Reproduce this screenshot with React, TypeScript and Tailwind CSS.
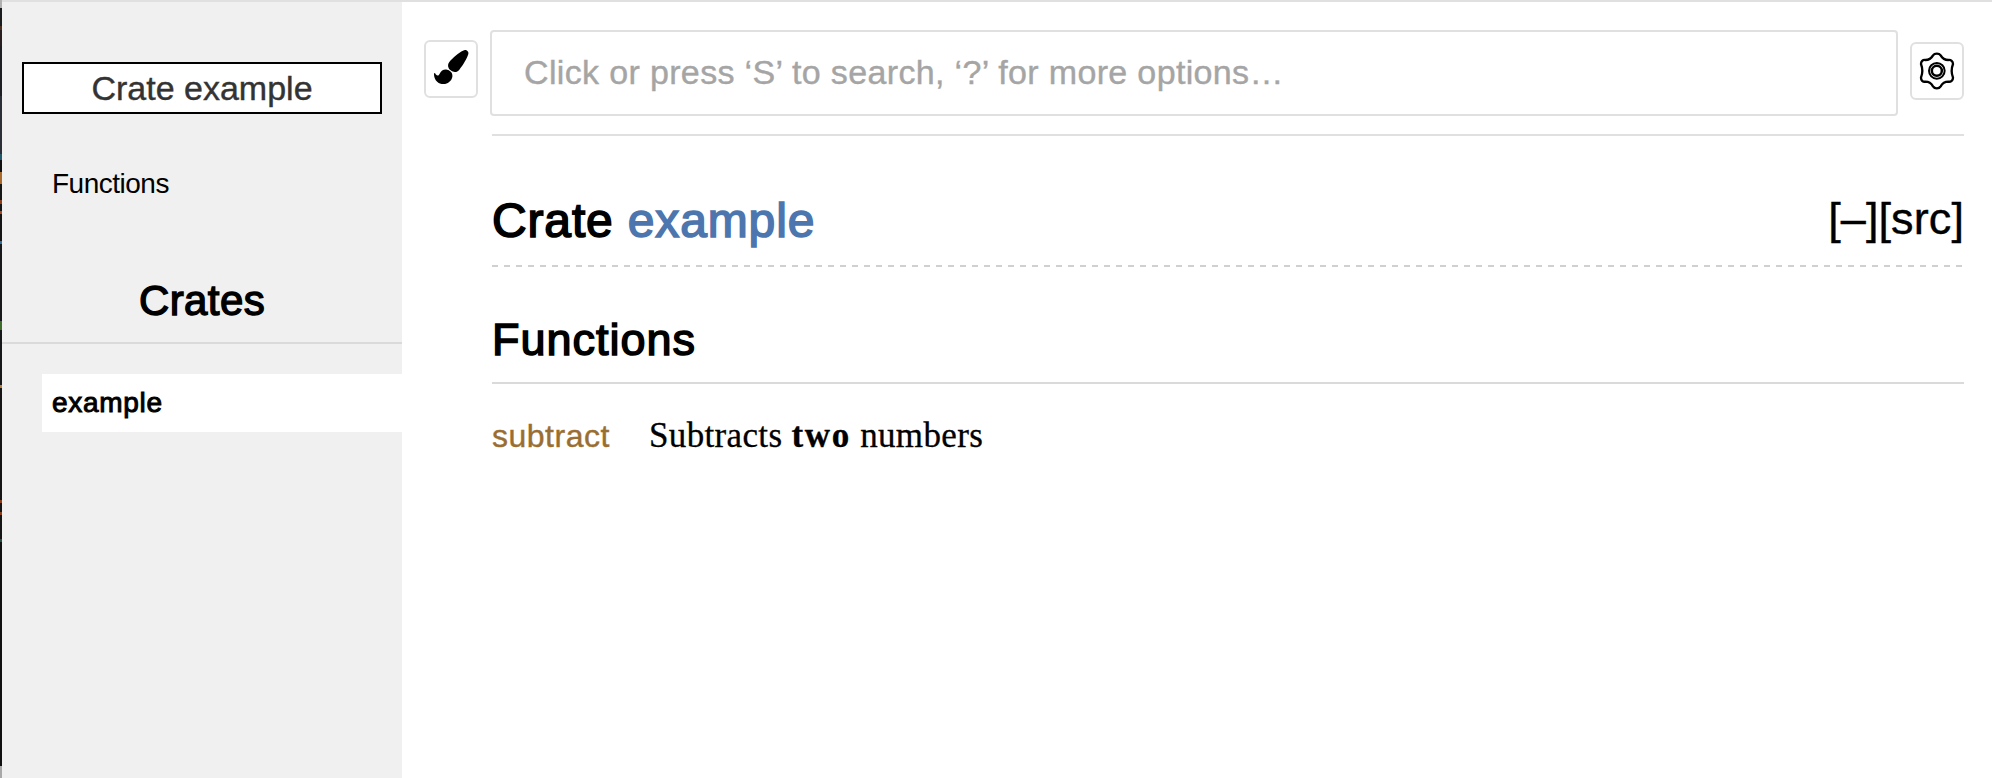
const STRIP: [number, number, string][] = [
  [0, 8, '#b0b0b0'], [8, 18, '#1a1c1e'], [26, 4, '#4a2f20'], [30, 16, '#2a1f20'], [46, 50, '#1d1f22'],
  [96, 58, '#2a2f38'], [154, 6, '#23576b'], [160, 12, '#101010'], [172, 12, '#a86a2c'], [184, 16, '#161616'],
  [200, 4, '#8a3f18'], [204, 7, '#161616'], [211, 3, '#a8481a'], [214, 27, '#141414'], [241, 3, '#2a6f9f'],
  [244, 77, '#17181a'], [321, 9, '#3f6b2c'], [330, 55, '#161718'], [385, 3, '#b87f3c'], [388, 112, '#151515'],
  [500, 3, '#8a3f18'], [503, 9, '#151515'], [512, 3, '#8a3f18'], [515, 24, '#151515'], [539, 3, '#245045'],
  [542, 224, '#101010'], [766, 12, '#a8a8a8'],
];

function Brush() {
  return (
    <svg viewBox="48 66 150 162" className="h-[54px] w-[50px]">
      <path d="M159 92C167 87 177 93 175 102C171 116 159 135 148 149C141 158 131 158 122 151C113 144 112 134 118 126C129 112 146 98 159 92Z" />
      <path d="M111 149C122 151 129 160 127 171C124 184 113 192 101 192C85 192 73 181 72 164C72 158 75 158 77 163C80 168 86 168 89 161C93 152 102 147 111 149Z" />
    </svg>
  );
}

function Gear() {
  return (
    <svg viewBox="96 72 150 162" className="h-[54px] w-[50px]" fill="none" stroke="#000">
      <path strokeWidth="7" strokeLinejoin="round" d="M159 106C164 99 177 99 182 106C187 115 194 120 205 120C213 119 219 124 219 132C214 145 214 160 219 173C219 181 213 186 205 185C194 185 187 190 182 199C177 207 164 207 159 199C154 190 147 185 136 185C128 186 123 181 123 173C128 160 128 145 123 132C123 124 128 119 136 120C147 120 154 115 159 106Z" />
      <circle cx="170.500" cy="152.500" r="23.500" strokeWidth="6" />
      <circle cx="170.500" cy="152.500" r="15" strokeWidth="7.500" />
    </svg>
  );
}

export default function App() {
  return (
    <div className="flex h-[778px] w-[1992px] overflow-hidden bg-white font-['Liberation_Sans',sans-serif] text-black">
      <div className="w-[2px] shrink-0">
        {STRIP.map(([y, h, c]) => <div key={y} style={{ height: h, background: c }} />)}
      </div>
      <div className="flex grow border-t-2 border-[#e0e0e0]">
        <aside className="w-[400px] shrink-0 bg-[#f0f0f0] pt-[60px]">
          <div className="mx-5 h-[52px] border-2 border-black bg-white text-center text-[34px] leading-[48px] text-[#333] [-webkit-text-stroke:0.4px_#333]">Crate example</div>
          <div className="mt-[50px] h-[40px] pl-[50px] text-[28px] leading-[40px] tracking-[-0.5px]">Functions</div>
          <h3 className="mt-[68px] h-[70px] pt-[4px] text-center text-[42px] leading-[50px] tracking-[0.4px] [-webkit-text-stroke:1.4px_#000]">Crates</h3>
          <div className="h-[2px] bg-[#dadada]" />
          <div className="mt-[30px] ml-[40px] h-[58px] bg-white pl-[10px] text-[28px] leading-[58px] tracking-[0.7px] [-webkit-text-stroke:1px_#000]">example</div>
        </aside>
        <main className="flex grow flex-col pr-[28px] pl-[22px] pt-[28px]">
          <div className="flex h-[86px] items-start">
            <button className="mt-[10px] h-[58px] w-[54px] shrink-0 rounded-[6px] border-2 border-[#e0e0e0]"><Brush /></button>
            <div className="ml-[12px] h-[86px] w-[1408px] shrink-0 rounded-[4px] border-2 border-[#e0e0e0] pl-[32px] text-[34px] leading-[81px] tracking-[0.35px] text-[#a5a5a5] [-webkit-text-stroke:0.4px_#a5a5a5]">Click or press ‘S’ to search, ‘?’ for more options…</div>
            <button className="mt-[12px] ml-[12px] h-[58px] w-[54px] shrink-0 rounded-[6px] border-2 border-[#e0e0e0]"><Gear /></button>
          </div>
          <div className="ml-[68px] mt-[18px] h-[2px] bg-[#e0e0e0]" />
          <div className="ml-[68px] flex h-[129px] justify-between">
            <h1 className="pt-[55px] text-[48px] leading-[60px] tracking-[0.85px] [-webkit-text-stroke:1.6px_currentColor]">Crate <span className="text-[#4d76ae]">example</span></h1>
            <div className="pt-[53px] text-[45px] leading-[60px] tracking-[0.1px] [-webkit-text-stroke:0.4px_#000]">[–][src]</div>
          </div>
          <div className="ml-[68px] h-[2px] bg-[repeating-linear-gradient(90deg,#d0d0d0_0_6px,transparent_6px_12px)]" />
          <h2 className="ml-[68px] h-[115px] pt-[43px] text-[45px] leading-[60px] tracking-[1px] [-webkit-text-stroke:1.5px_#000]">Functions</h2>
          <div className="ml-[68px] h-[2px] bg-[#dadada]" />
          <div className="ml-[68px] flex pt-[32px] leading-[40px]">
            <div className="w-[157px] text-[32px] tracking-[0.5px] text-[#9a6e31] [-webkit-text-stroke:0.4px_#9a6e31]">subtract</div>
            <div className="font-['Liberation_Serif',serif] text-[35px] tracking-[0.35px] [-webkit-text-stroke:0.3px_#000]">Subtracts <b className="tracking-[1.7px]">two</b> numbers</div>
          </div>
        </main>
      </div>
    </div>
  );
}
